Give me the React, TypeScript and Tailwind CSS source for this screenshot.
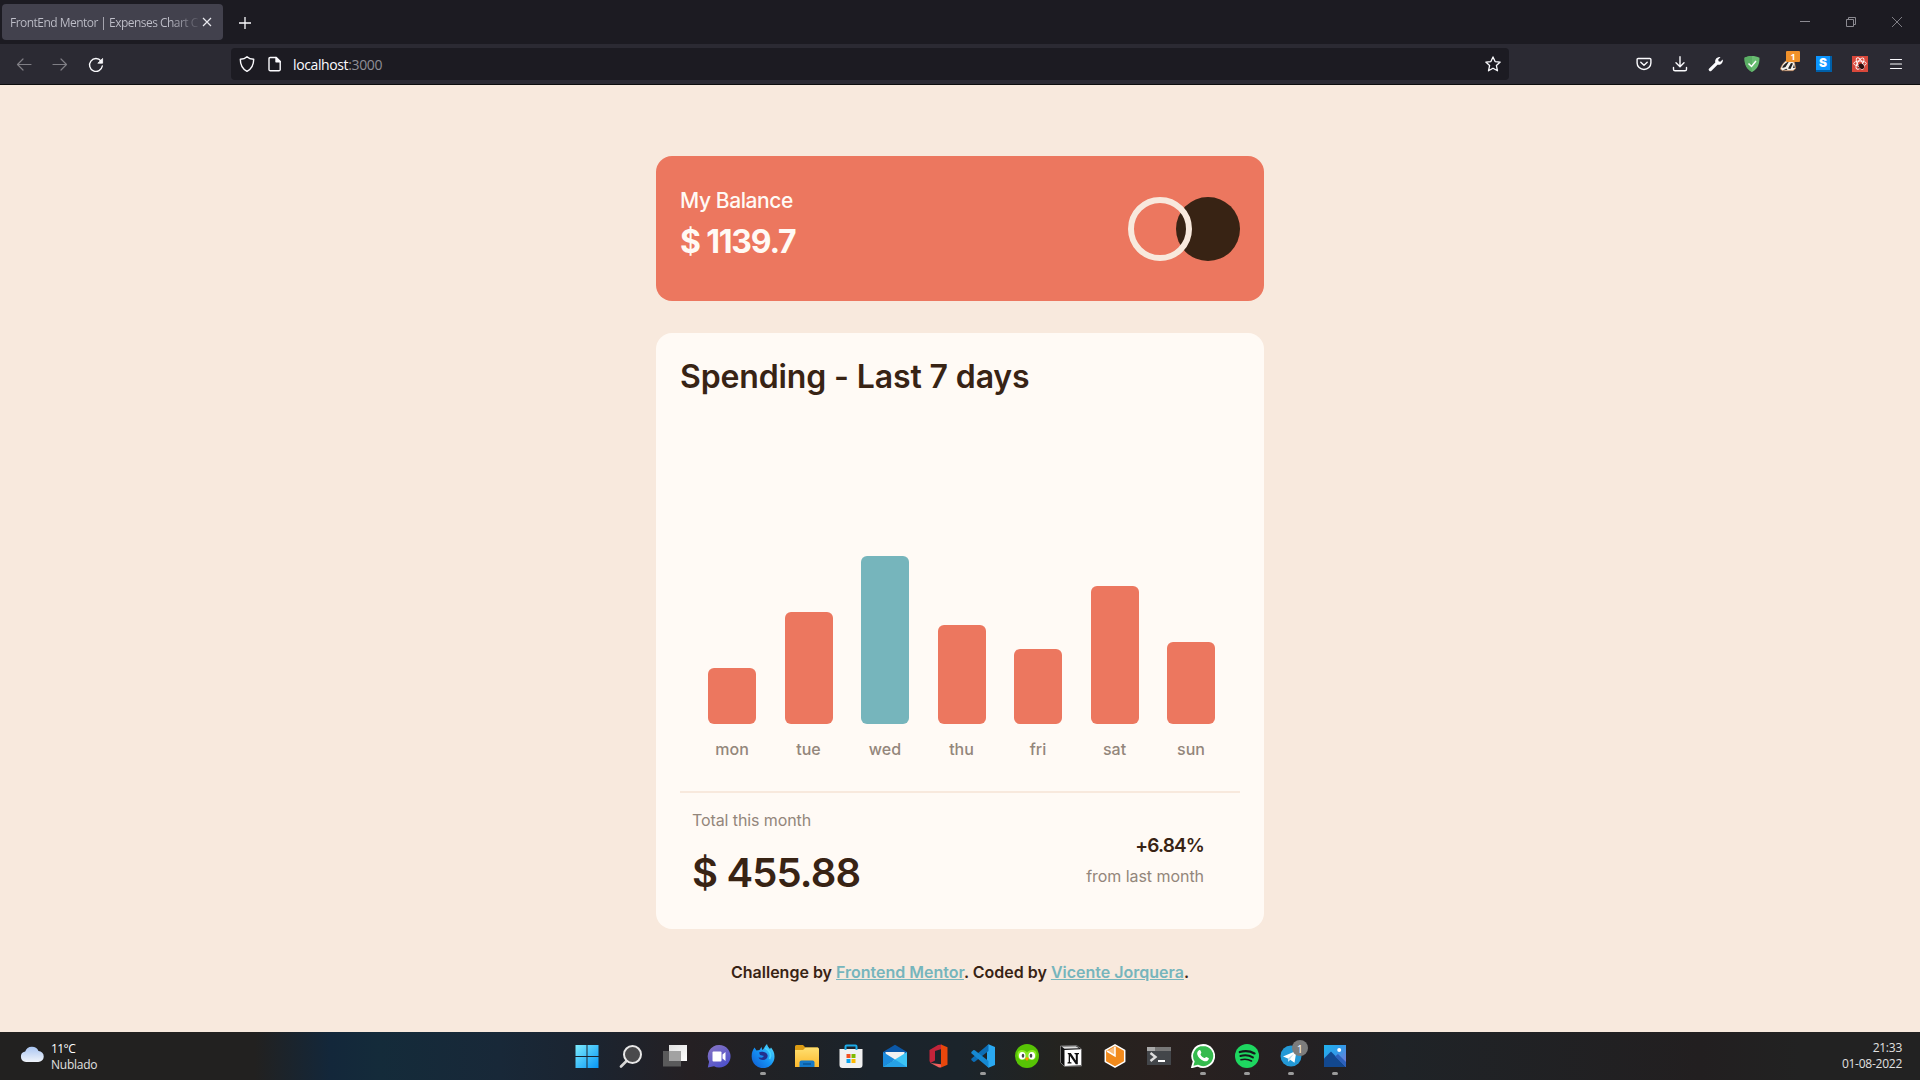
import type { ReactNode } from "react";

const days = [
  { day: "mon", height: 56 },
  { day: "tue", height: 112 },
  { day: "wed", height: 168 },
  { day: "thu", height: 99 },
  { day: "fri", height: 75 },
  { day: "sat", height: 138 },
  { day: "sun", height: 82 },
];

function Slot({ children }: { children: ReactNode }) {
  return <div className="flex h-10 w-9 shrink-0 items-center justify-center">{children}</div>;
}

function TabBar() {
  return (
    <div className="flex h-11 items-center bg-[#1c1b22] pl-0.5">
      <div className="flex h-9 w-[221px] items-center rounded bg-[#42414d] pl-2">
        <div className="mt-px w-[189px] overflow-hidden whitespace-nowrap bg-gradient-to-r from-[#bfbfc9] from-85% to-[#bfbfc9]/10 bg-clip-text text-xs tracking-[-0.53px] text-transparent">
          FrontEnd Mentor | Expenses Chart C
        </div>
        <svg className="h-4 w-4" viewBox="0 0 16 16" stroke="#e8e8ee" strokeWidth="1.2">
          <path d="M4 4l8 8M12 4l-8 8" />
        </svg>
      </div>
      <svg className="ml-3.5 mt-px h-4 w-4" viewBox="0 0 16 16" stroke="#fbfbfe" strokeWidth="1.3">
        <path d="M8 2v12M2 8h12" />
      </svg>
      <div className="ml-auto flex">
        <div className="flex w-[46px] justify-center">
          <svg className="h-3 w-3" viewBox="0 0 12 12" stroke="#8b8a91"><path d="M1 5.5h10" /></svg>
        </div>
        <div className="flex w-[46px] justify-center">
          <svg className="h-3 w-3" viewBox="0 0 12 12" fill="none" stroke="#8b8a91"><path d="M1.5 3.5h7v7h-7zM3.500 3.500v-2h7v7h-2" /></svg>
        </div>
        <div className="flex w-[46px] justify-center">
          <svg className="h-3 w-3" viewBox="0 0 12 12" stroke="#8b8a91" strokeWidth=".9"><path d="M1 1l10 10M11 1L1 11" /></svg>
        </div>
      </div>
    </div>
  );
}

function NavBar() {
  return (
    <div className="flex h-[41px] items-start border-b border-[#0c0c0d] bg-[#2b2a33] pl-1.5">
      <Slot>
        <svg className="h-4 w-4" viewBox="0 0 16 16" fill="none" stroke="#7f7e85" strokeWidth="1.2" strokeLinecap="round" strokeLinejoin="round"><path d="M1.500 8.500h13.500M7 3L1.500 8.500 7 14" /></svg>
      </Slot>
      <Slot>
        <svg className="h-4 w-4" viewBox="0 0 16 16" fill="none" stroke="#7f7e85" strokeWidth="1.2" strokeLinecap="round" strokeLinejoin="round"><path d="M1 8.500h13.500M9 3l5.500 5.500L9 14" /></svg>
      </Slot>
      <Slot>
        <svg className="mt-0.5 h-4 w-4" viewBox="0 0 16 16" fill="none" stroke="#fbfbfe" strokeWidth="1.4" strokeLinecap="round"><path d="M13 4A6.400 6.400 0 1 0 14.300 9" /><path d="M14.600 1.800v4.400h-4.400z" fill="#fbfbfe" stroke="#fbfbfe" strokeWidth=".8" strokeLinejoin="round" /></svg>
      </Slot>
      <div className="ml-[117px] mt-1 flex h-8 w-[1278px] items-center rounded bg-[#1c1b22] pl-2 pr-2">
        <svg className="h-4 w-4" viewBox="0 0 16 16" fill="none" stroke="#fbfbfe" strokeWidth="1.4" strokeLinejoin="round"><path d="M8 .8C6.300 2.500 3.800 3.200 1.300 3.300c0 5.200 1.400 9.400 6.700 12 5.300-2.600 6.700-6.800 6.700-12C12.200 3.200 9.700 2.500 8 .8z" /></svg>
        <svg className="ml-3 h-4 w-4" viewBox="0 0 16 16" fill="none" stroke="#fbfbfe" strokeWidth="1.4" strokeLinejoin="round"><path d="M3.200 1.500h6l4 4v8a1.200 1.200 0 0 1-1.200 1.200H3.200A1.200 1.200 0 0 1 2 13.500V2.700a1.200 1.200 0 0 1 1.200-1.200z" /><path d="M9 1.500v4.300h4.200z" fill="#fbfbfe" /></svg>
        <span className="ml-2.5 mt-0.5 text-sm tracking-[-0.38px] text-[#fbfbfe]">localhost<span className="text-[#8f8e96]">:3000</span></span>
        <svg className="ml-auto h-4 w-4" viewBox="0 0 16 16" fill="none" stroke="#fbfbfe" strokeWidth="1.3" strokeLinejoin="round"><path d="M8 .9l2.100 4.700 5.100.5-3.800 3.500 1.100 5.200L8 12.200l-4.500 2.600 1.100-5.200L.8 6.100l5.100-.5z" /></svg>
      </div>
      <div className="ml-auto mr-1.5 flex">
        <Slot>
          <svg className="h-4 w-4" viewBox="0 0 16 16" fill="none" stroke="#fbfbfe" strokeWidth="1.4" strokeLinecap="round" strokeLinejoin="round"><path d="M2.200 2.500h11.600a1.100 1.100 0 0 1 1.100 1.100V7a6.900 6.500 0 0 1-13.800 0V3.600a1.100 1.100 0 0 1 1.100-1.100z" /><path d="M4.800 6.300L8 9.200l3.200-2.900" /></svg>
        </Slot>
        <Slot>
          <svg className="h-4 w-4" viewBox="0 0 16 16" fill="none" stroke="#fbfbfe" strokeWidth="1.4" strokeLinecap="round" strokeLinejoin="round"><path d="M8 .8v9.700M4 6.800l4 3.900 4-3.900M1.500 11.500v1.700a1.600 1.600 0 0 0 1.600 1.600h9.800a1.600 1.600 0 0 0 1.600-1.600v-1.700" /></svg>
        </Slot>
        <Slot>
          <svg className="h-4 w-4" viewBox="0 0 16 16" fill="#fbfbfe"><path d="M14.700 3.400l-2.400 2.300-1.700-.4-.4-1.700 2.300-2.400A4.300 4.300 0 0 0 7.300 6.500L1.200 12.400a1.600 1.600 0 1 0 2.300 2.300l6-6a4.300 4.300 0 0 0 5.200-5.300z" /></svg>
        </Slot>
        <Slot>
          <svg className="h-4 w-4" viewBox="0 0 16 16"><path d="M8 0C5.500 0 2.500.6.500 1.700 0.500 8 2 12.500 8 16c6-3.500 7.500-8 7.500-14.300C13.500.6 10.500 0 8 0z" fill="#68bc71" /><path d="M8 0v16C2 12.500.5 8 .5 1.700 2.500.6 5.500 0 8 0z" fill="#5aae64" /><path d="M4.500 7.500l3 3 4.500-5.500" fill="none" stroke="#fff" strokeWidth="1.500" /></svg>
        </Slot>
        <Slot>
          <div className="relative h-4 w-4">
            <svg className="h-4 w-4" viewBox="0 0 16 16"><path d="M.3 13C1.500 9.500 4.500 5 8 3.500l6.500 3 1.200 6-2.700 2.200H2.500z" fill="#f4f1ec" stroke="#c77a3c" strokeWidth=".6" /><path d="M2 11.500C4 8 6.500 6 9 5.500L5.500 11l-2 .8z M8 12.500l3-5.500 2 .5-2.500 5.500z M13 12l1-3.500.8 3.500z M2.500 14.500l4-1.700 1 1z" fill="#222" /></svg>
            <span className="absolute -top-[5px] left-1.5 flex h-[11px] w-3.5 items-center justify-center rounded-[1px] bg-[#f0912b] text-[9px] font-bold leading-none text-white">1</span>
          </div>
        </Slot>
        <Slot>
          <div className="relative h-4 w-4 bg-[#005fa8]">
            <div className="flex h-3.5 w-3.5 items-center justify-center bg-[#0c95ff] font-['Inter'] text-xs font-black leading-none text-white">S</div>
          </div>
        </Slot>
        <Slot>
          <svg className="h-4 w-4" viewBox="0 0 16 16"><path d="M0 0h16v16H0z" fill="#d9483b" /><g fill="none" stroke="#fff" strokeWidth=".9"><ellipse cx="8" cy="7.500" rx="6.300" ry="2.500" /><ellipse cx="8" cy="7.500" rx="6.300" ry="2.500" transform="rotate(60 8 7.500)" /><ellipse cx="8" cy="7.500" rx="6.300" ry="2.500" transform="rotate(120 8 7.500)" /></g><ellipse cx="9.500" cy="10.300" rx="2.300" ry="3" transform="rotate(-35 9.500 10.300)" fill="#2b1010" /><path d="M6 9.500l6.500 2.500M7.500 13l4-5.500M6 12l6-2.500" stroke="#2b1010" strokeWidth=".7" /></svg>
        </Slot>
        <Slot>
          <svg className="h-4 w-4" viewBox="0 0 16 16" stroke="#fbfbfe" strokeWidth="1.200" strokeLinecap="round"><path d="M2.500 3.500h11M2.500 8h11M2.500 12.500h11" /></svg>
        </Slot>
      </div>
    </div>
  );
}

function BalanceCard() {
  return (
    <section className="flex h-[145px] items-start justify-between rounded-2xl bg-[#ec775f] px-6 pt-[31px] text-[#fffaf5]">
      <div>
        <p className="text-[21px] font-medium leading-7 tracking-[-0.4px]">My Balance</p>
        <p className="mt-[7px] text-[32px] font-bold leading-10 tracking-[-1.2px]">$ 1139.7</p>
      </div>
      <svg className="mt-2.5 h-16 w-28" viewBox="0 0 112 64">
        <circle cx="80" cy="32" r="32" fill="#382314" />
        <circle cx="32" cy="32" r="29" fill="none" stroke="#f8e9dd" strokeWidth="6" />
      </svg>
    </section>
  );
}

function SpendingCard() {
  return (
    <section className="mt-8 flex h-[596px] flex-col rounded-2xl bg-[#fffaf5] px-6 pt-6">
      <h1 className="text-[32px] font-semibold leading-10 tracking-[-0.13px]">Spending - Last 7 days</h1>
      <div className="flex h-[364px] items-end justify-between pl-4 pr-[13px]">
        {days.map(({ day, height }) => (
          <div key={day} className="flex w-[72px] flex-col items-center">
            <div
              className={day === "wed" ? "w-12 rounded-md bg-[#76b5bc]" : "w-12 rounded-md bg-[#ec775f]"}
              style={{ height }}
            />
            <span className="mt-[13px] font-medium leading-6 text-[#93867b]">{day}</span>
          </div>
        ))}
      </div>
      <div className="mt-[30px] h-0.5 shrink-0 bg-[#f8e9dd]" />
      <div className="flex justify-between pl-3 pr-9 pt-[15px]">
        <div>
          <p className="leading-6 tracking-[-0.1px] text-[#93867b]">Total this month</p>
          <p className="mt-[17px] text-[40px] font-semibold leading-[48px] tracking-[-0.85px]">$ 455.88</p>
        </div>
        <div className="mt-6 text-right">
          <p className="text-[19px] font-semibold leading-7 tracking-[-0.85px]">+6.84%</p>
          <p className="mt-1 leading-6 tracking-[-0.05px] text-[#93867b]">from last month</p>
        </div>
      </div>
    </section>
  );
}

function TaskItem({ children, running = false }: { children: ReactNode; running?: boolean }) {
  return (
    <div className="flex h-12 w-11 flex-col items-center pt-3">
      {children}
      {running && <div className="mt-1 h-[3px] w-1.5 rounded-full bg-[#9b9b9b]" />}
    </div>
  );
}

const icon = "h-6 w-6 shrink-0";

function Taskbar() {
  return (
    <footer className="flex h-12 items-center justify-between bg-[linear-gradient(90deg,#222120_0,#222120_255px,#13273a_330px,#142b3a_380px,#182838_500px,#1b2430_590px,#252023_690px,#1f2226_790px,#1b232b_870px,#1b242b_960px,#24231f_1060px,#29211f_1160px,#242022_1290px,#1f2327_1400px,#221f20_1700px,#222222_1800px)] text-xs leading-4 text-[#e0e0e0]">
      <div className="flex w-[565px] items-center pl-5">
        <svg className="-mt-1 h-6 w-6" viewBox="0 0 24 24">
          <defs><linearGradient id="cloud" x1="0" y1="0" x2="0" y2="1"><stop stopColor="#a9c5f2" /><stop offset="1" stopColor="#f0f4fa" /></linearGradient></defs>
          <path d="M6 20a5.300 5.300 0 0 1-.8-10.500A7.200 7.200 0 0 1 18.500 9 5.500 5.500 0 0 1 18 20z" fill="url(#cloud)" />
        </svg>
        <div className="ml-[7px] mt-0.5 tracking-[-0.25px]">
          <p className="tracking-[-0.55px] text-white">11°C</p>
          <p>Nublado</p>
        </div>
      </div>
      <div className="flex">
        <TaskItem>
          <svg className={icon} viewBox="0 0 24 24"><defs><linearGradient id="win" x1="0" y1="0" x2="1" y2="1"><stop stopColor="#7cebfd" /><stop offset="1" stopColor="#0796f5" /></linearGradient></defs><path d="M.5 1h11v11H.5zM12.500 1h11v11h-11zM.5 13h11v11H.5zM12.500 13h11v11h-11z" fill="url(#win)" /></svg>
        </TaskItem>
        <TaskItem>
          <svg className={icon} viewBox="0 0 24 24"><path d="M8.500 16L2 22.500" stroke="#d5d5d5" strokeWidth="2.600" strokeLinecap="round" /><circle cx="13.500" cy="10.500" r="8.500" fill="#4a4a4c" stroke="#e8e8e8" strokeWidth="2" /></svg>
        </TaskItem>
        <TaskItem>
          <svg className={icon} viewBox="0 0 24 24"><defs><linearGradient id="tv" x1="0" y1="0" x2="1" y2="1"><stop stopColor="#e0e0e0" /><stop offset="1" stopColor="#fff" /></linearGradient></defs><path d="M6 1h18v16H6z" fill="url(#tv)" /><path d="M0 7h18v15.500H0z" fill="#5a5a5b" /><path d="M6 7h12v10H6z" fill="#a2a2a2" /></svg>
        </TaskItem>
        <TaskItem>
          <svg className={icon} viewBox="0 0 24 24"><defs><linearGradient id="chat" x1="0" y1="0" x2=".6" y2="1"><stop stopColor="#8a76c2" /><stop offset="1" stopColor="#4f52cc" /></linearGradient></defs><path d="M12 1a11.300 11.300 0 1 1-5 21.300L.8 23.500l1.300-5.700A11.300 11.300 0 0 1 12 1z" fill="url(#chat)" /><rect x="5.500" y="7.500" width="9" height="10" rx="1" fill="#fff" /><path d="M15.500 10.500l3-2.500v9l-3-2.500z" fill="#fff" /></svg>
        </TaskItem>
        <TaskItem running>
          <svg className={icon} viewBox="0 0 24 24"><defs><linearGradient id="fox" x1="1" y1="0" x2="0" y2="1"><stop stopColor="#5be7ff" /><stop offset=".5" stopColor="#1593f5" /><stop offset="1" stopColor="#0f59cf" /></linearGradient></defs><path d="M3.500 3.500l2 3 3-.5 2-3 .8 3C13 5 13.500 2 16 0c.5 2.500 2 3.500 3 5l1-1.500c2 2.500 3.500 5 3.500 9A11.400 11.400 0 0 1 .7 13C.5 9 1.500 6.500 3.500 3.500z" fill="url(#fox)" /><path d="M8 8.500c2.500-1.500 7.500-.5 8.500 2.500.7 3-1.500 5-4.500 5-2.300 0-4-1-4.500-2.500l3.500.3 2-1.800-4-1z" fill="#23308e" /><path d="M14 4c5 2 7 7 4.500 11" stroke="#45d5ff" strokeWidth="1.800" fill="none" /></svg>
        </TaskItem>
        <TaskItem>
          <svg className={icon} viewBox="0 0 24 24"><defs><linearGradient id="folder" x1="0" y1="0" x2="0" y2="1"><stop stopColor="#ffe071" /><stop offset="1" stopColor="#fcb92c" /></linearGradient></defs><path d="M0 2.500A1.500 1.500 0 0 1 1.500 1H8l2.500 2.500H23V8H0z" fill="#dc9c13" /><path d="M0 6h8l2.500-2.500H22.500A1.500 1.500 0 0 1 24 5v18H0z" fill="url(#folder)" /><path d="M4.500 23v-4.500a2 2 0 0 1 2-2h11a2 2 0 0 1 2 2V23z" fill="#1579c8" /><path d="M8 20h8" stroke="#0a5799" strokeWidth="1.500" /></svg>
        </TaskItem>
        <TaskItem>
          <svg className={icon} viewBox="0 0 24 24"><path d="M.5 5h23v16a3 3 0 0 1-3 3h-17a3 3 0 0 1-3-3z" fill="#f1f1f1" /><path d="M6.500 6V2.500A1 1 0 0 1 7.500 1.500h9a1 1 0 0 1 1 1V6" fill="none" stroke="#1cabe8" strokeWidth="2" /><path d="M7.500 10h4v4h-4z" fill="#f25022" /><path d="M12.500 10h4v4h-4z" fill="#7fba00" /><path d="M7.500 15h4v4h-4z" fill="#0aa4ee" /><path d="M12.500 15h4v4h-4z" fill="#ffb900" /></svg>
        </TaskItem>
        <TaskItem>
          <svg className={icon} viewBox="0 0 24 24"><path d="M0 8L12 .8 24 8v2H0z" fill="#0b58a8" /><path d="M2.500 8h19v5L12 18l-9.500-5z" fill="#f1f1f1" /><path d="M0 8l12 7.500L0 23z" fill="#1b8bdd" /><path d="M24 8v15H0z" fill="#3dc4f5" /><path d="M12 15.500L24 23H0z" fill="#26a2e7" /></svg>
        </TaskItem>
        <TaskItem>
          <svg className={icon} viewBox="0 0 24 24"><path d="M11 1l3.500-.5V5L8 7v9.500L3.500 19 2.500 17V6z" fill="#c4243a" /><path d="M14 .5l6.500 2.700v17.600L14 23.500z" fill="#e8470c" /><path d="M3.500 19L14 20.300v3.200h-2z" fill="#f1605e" /></svg>
        </TaskItem>
        <TaskItem running>
          <svg className={icon} viewBox="0 0 24 24"><path d="M17.500.3L24 3v18l-6.500 2.700L16 22V2z" fill="#2aa9f2" /><path d="M17.500.3V7L3.800 17.700 2.600 18 .3 16v-1.300z" fill="#0c6db5" /><path d="M17.500 23.700V17L3.800 6.300 2.600 6 .3 8v1.300z" fill="#1689d2" /></svg>
        </TaskItem>
        <TaskItem>
          <svg className={icon} viewBox="0 0 24 24"><circle cx="12" cy="12" r="12" fill="#57c305" /><path d="M2.500 10c0-3 2.500-4 4.500-4s4 1 5 2.500C13 7 15 6 17 6s4.500 1 4.500 4c0 4-2.500 6-4.500 6s-4-1-5-2c-1 1-3 2-5 2s-4.500-2-4.500-6z" fill="#8aea22" /><ellipse cx="7.200" cy="11.800" rx="3.300" ry="3.800" fill="#fff" /><ellipse cx="16.800" cy="11.800" rx="3.300" ry="3.800" fill="#fff" /><ellipse cx="8" cy="11.800" rx="1.300" ry="2" fill="#46474c" /><ellipse cx="16" cy="11.800" rx="1.300" ry="2" fill="#46474c" /><path d="M10 14.500l2-1.500 2 1.500-2 2.500z" fill="#ff9300" /></svg>
        </TaskItem>
        <TaskItem>
          <svg className={icon} viewBox="0 0 24 24"><path d="M1.500 2l16-.5L22.500 5v17l-17 .5-4-4z" fill="#111" stroke="#aaa" strokeWidth=".6" /><path d="M2.500 2.500l14.500-.3L20 4.200 5.500 4.800z" fill="#ddd" /><path d="M5.500 6l16.500-.7v16L5.500 22z" fill="#fff" /><path d="M8.800 9h3l5 7.500v-6l-1.300-.5V9H20v1l-1.200.5v9.700h-2L11 12v6l1.500.6v1H8.500v-1l1.200-.6v-7.500L8.800 10z" fill="#111" /></svg>
        </TaskItem>
        <TaskItem>
          <svg className={icon} viewBox="0 0 24 24"><path d="M12 .8L21.700 6.400v11.200L12 23.200 2.300 17.600V6.400z" fill="#f18a1c" stroke="#fff" strokeWidth="1.500" strokeLinejoin="round" /><path d="M4 7.200L12 2.600v9.400z" fill="#f9bd7d" /><path d="M4 7l8 5V2.500" fill="none" stroke="#fff" strokeWidth="1.500" /></svg>
        </TaskItem>
        <TaskItem>
          <svg className={icon} viewBox="0 0 24 24"><path d="M0 3h24v18H0z" fill="#43464a" /><path d="M0 3h24v4H0z" fill="#a9a9a9" /><path d="M8 3h16v4H8z" fill="#777" /><path d="M3.500 9l5 4-5 4" fill="none" stroke="#ddd" strokeWidth="2.400" /><path d="M11 17h7" stroke="#fff" strokeWidth="2" /></svg>
        </TaskItem>
        <TaskItem running>
          <svg className={icon} viewBox="0 0 24 24"><path d="M12.200 1a11 11 0 1 1-5.400 20.600L1 23.200l1.700-5.700A11 11 0 0 1 12.200 1z" fill="#35bb4e" stroke="#fff" strokeWidth="1.800" /><path d="M8 6.300c.7-.4 1.300-.2 1.500.3l.8 2c.2.600-.9 1.400-.8 1.900.8 1.600 2.200 2.900 4 3.600.6.200 1.200-1.400 1.800-1.200l2.200 1.100c.5.300.4 1-.1 1.800-1 1.600-2.900 1.900-4.700 1.200-3.200-1.200-5.700-3.700-6.400-6.400-.4-1.700.3-3.400 1.700-4.300z" fill="#fff" /></svg>
        </TaskItem>
        <TaskItem running>
          <svg className={icon} viewBox="0 0 24 24"><circle cx="12" cy="12" r="12" fill="#1ed760" /><g fill="none" stroke="#16181a" strokeLinecap="round"><path d="M4.800 8c5-1.500 10.500-1 14.700 1.400" strokeWidth="2.300" /><path d="M5.400 12c4-1.200 8.800-.8 12.500 1.400" strokeWidth="2" /><path d="M6 15.700c3.500-.9 7.300-.6 10.500 1.300" strokeWidth="1.600" /></g></svg>
        </TaskItem>
        <TaskItem running>
          <div className="relative h-6 w-6 shrink-0">
            <svg className={icon} viewBox="0 0 24 24"><circle cx="12" cy="12" r="10.500" fill="#2499d6" /><path d="M4 12.500l13.500-5.800-2 12-4.300-3-2 2-.3-3.300z" fill="#fff" /><path d="M9 14.500l6-5-4.300 6-1.500 2z" fill="#b8daee" /></svg>
            <span className="absolute -top-1 left-[13px] flex h-4 w-4 items-center justify-center rounded-full bg-[#7c7c7c] text-[11px] leading-none text-white">1</span>
          </div>
        </TaskItem>
        <TaskItem running>
          <svg className={icon} viewBox="0 0 24 24"><defs><linearGradient id="photo" x1="0" y1="0" x2="1" y2="1"><stop stopColor="#1fb2ee" /><stop offset=".45" stopColor="#319be9" /><stop offset="1" stopColor="#8473d0" /></linearGradient></defs><path d="M1 1h22v22H1z" fill="url(#photo)" /><path d="M1 14.500L8 7.500 23 23H1z" fill="#12488f" /><path d="M12 12.500l3-2.500 8 8v5z" fill="#2c62bd" /><circle cx="16.200" cy="6" r="2" fill="#fff" /></svg>
        </TaskItem>
      </div>
      <div className="w-[563px] pr-[18px] text-right tracking-[-0.25px]">
        <p>21:33</p>
        <p>01-08-2022</p>
      </div>
    </footer>
  );
}

export default function App() {
  return (
    <div className="flex h-[1080px] w-[1920px] flex-col overflow-hidden bg-[#f8e9dd] font-['Open_Sans',sans-serif]">
      <TabBar />
      <NavBar />
      <main className="mx-auto w-[608px] flex-1 pt-[71px] font-['Inter',sans-serif] text-base text-[#382314]">
        <BalanceCard />
        <SpendingCard />
        <p className="mt-[31px] text-center font-semibold leading-6">
          Challenge by <a className="text-[#76b5bc] underline">Frontend Mentor</a>. Coded by{" "}
          <a className="text-[#76b5bc] underline">Vicente Jorquera</a>.
        </p>
      </main>
      <Taskbar />
    </div>
  );
}
